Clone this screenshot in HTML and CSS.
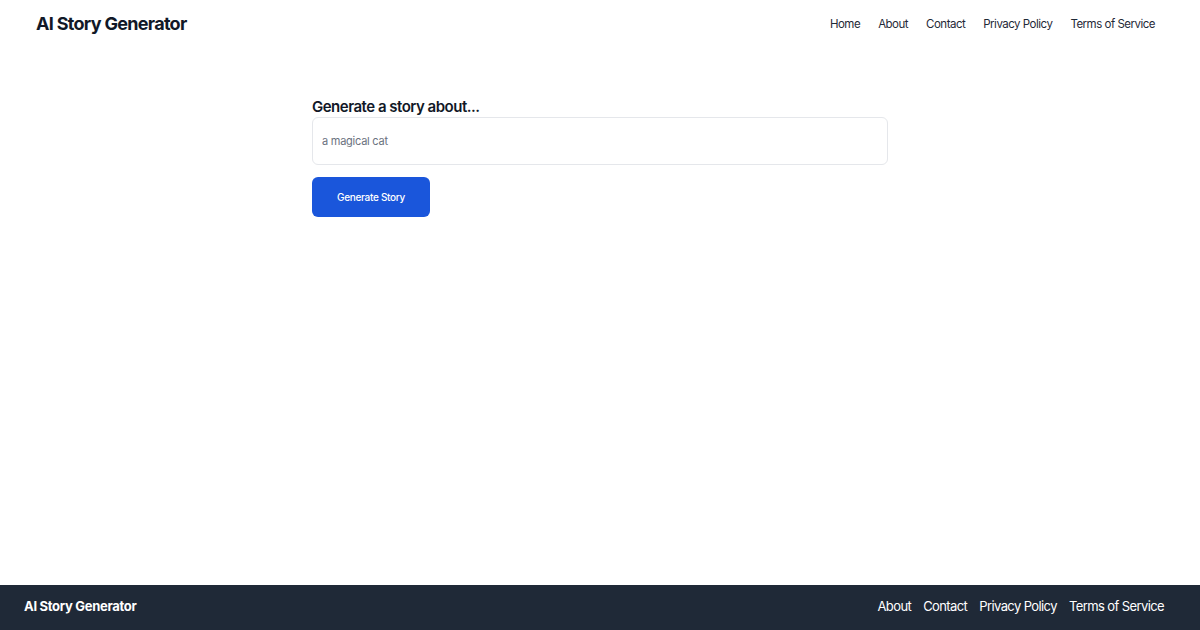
FILE: index.html
```html
<!DOCTYPE html>
<html>
<head>
  <title>AI Story Generator</title>
  <meta charset="UTF-8">
  <link rel="stylesheet" href="styles.css">
</head>
<body>
  <div class="pageDiv">
    <header class="topBar">
      <a class="brand" href="#">AI Story Generator</a>
      <nav class="topNav">
        <a href="#">Home</a>
        <a href="#">About</a>
        <a href="#">Contact</a>
        <a href="#">Privacy Policy</a>
        <a href="#">Terms of Service</a>
      </nav>
    </header>

    <main class="mainDiv">
      <form class="storyForm" onsubmit="return false">
        <label class="formLabel" for="topic">Generate a story about...</label>
        <input class="topicInput" id="topic" type="text" placeholder="a magical cat">
        <div>
          <button class="buttonGenerate" type="submit">Generate Story</button>
        </div>
      </form>
    </main>

    <footer class="footBar">
      <span class="footBrand">AI Story Generator</span>
      <nav class="footNav">
        <a href="#">About</a>
        <a href="#">Contact</a>
        <a href="#">Privacy Policy</a>
        <a href="#">Terms of Service</a>
      </nav>
    </footer>
  </div>
</body>
</html>
```
FILE: styles.css
```css
* {
  box-sizing: border-box;
}
body {
  margin: 0;
  font-family: Inter, "Noto Sans", sans-serif;
  color: #111827;
  background: #fff;
}
a {
  text-decoration: none;
  color: inherit;
}
.pageDiv {
  display: flex;
  flex-direction: column;
  min-height: 100vh;
}
.topBar {
  display: flex;
  align-items: center;
  justify-content: space-between;
  height: 47px;
  padding: 0 45px 0 36px;
}
.brand {
  font-size: 18px;
  font-weight: 700;
  letter-spacing: -0.7px;
}
.topNav {
  display: flex;
  gap: 18px;
  font-size: 11.5px;
  letter-spacing: -0.5px;
  color: #1f2937;
}
.mainDiv {
  flex: 1;
  padding-top: 50px;
}
.storyForm {
  width: 576px;
  margin: 0 auto;
  display: flex;
  flex-direction: column;
}
.formLabel {
  font-size: 15px;
  font-weight: 600;
  letter-spacing: -0.5px;
  margin-bottom: 1px;
}
.topicInput {
  height: 48px;
  padding: 0 9px;
  border: 1px solid #e5e7eb;
  border-radius: 6px;
  font-family: inherit;
  font-size: 11px;
  letter-spacing: -0.25px;
  color: #111827;
}
.topicInput::placeholder {
  color: #6b7280;
}
.buttonGenerate {
  margin-top: 12px;
  width: 118px;
  height: 40px;
  border: none;
  border-radius: 6px;
  background: #1a56db;
  color: #fff;
  font-family: inherit;
  font-size: 10px;
  font-weight: 500;
  letter-spacing: -0.3px;
}
.footBar {
  display: flex;
  align-items: center;
  justify-content: space-between;
  height: 45px;
  padding: 0 36px 3px 24px;
  background: #1f2937;
  color: #fff;
}
.footBrand {
  font-size: 13px;
  font-weight: 700;
  letter-spacing: -0.3px;
}
.footNav {
  display: flex;
  gap: 12px;
  font-size: 13px;
  letter-spacing: -0.6px;
}
```
